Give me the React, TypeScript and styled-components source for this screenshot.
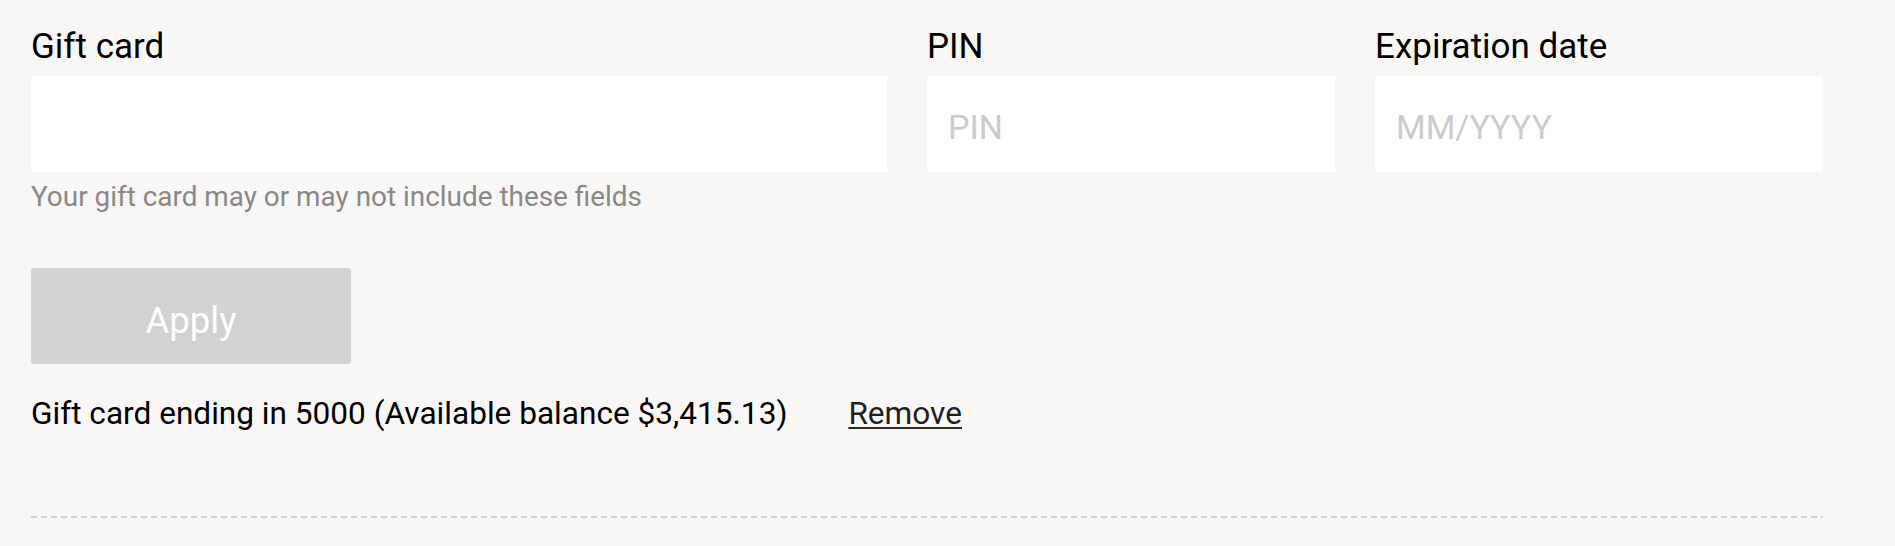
import React from "react";
import styled, { createGlobalStyle } from "styled-components";

const GlobalStyle = createGlobalStyle`
  html, body {
    margin: 0;
    padding: 0;
    background: #f8f7f6;
  }
  body {
    font-family: Roboto, "Liberation Sans", Arial, sans-serif;
    color: #000;
  }
`;

const Page = styled.div`
  width: 1895px;
  height: 546px;
  box-sizing: border-box;
  padding: 23px 0 0 31px;
  background: #f8f7f6;
`;

const Form = styled.div`
  width: 1792px;
  display: flex;
  flex-direction: column;
  align-items: flex-start;
`;

const FieldRow = styled.div`
  display: grid;
  grid-template-columns: 856px 408px 447px;
  column-gap: 40px;
`;

const Field = styled.div`
  display: flex;
  flex-direction: column;
`;

const Label = styled.label`
  font-size: 35px;
  line-height: 48px;
  height: 48px;
  margin-bottom: 5px;
  color: #000;
  white-space: nowrap;
`;

const Input = styled.input`
  box-sizing: border-box;
  width: 100%;
  height: 96px;
  margin: 0;
  border: none;
  outline: none;
  border-radius: 0;
  background: #ffffff;
  padding: 6px 21px 0;
  font-family: Roboto, "Liberation Sans", Arial, sans-serif;
  font-size: 34px;
  color: #000;

  &::placeholder {
    color: #cccccc;
    opacity: 1;
  }
`;

const Hint = styled.div`
  font-size: 27.9px;
  line-height: 40px;
  margin-top: 5px;
  color: #8a8886;
  white-space: nowrap;
`;

const ApplyButton = styled.button`
  box-sizing: border-box;
  width: 320px;
  height: 96px;
  margin-top: 51px;
  padding: 9px 0 0;
  border: none;
  border-radius: 3px;
  background: #d2d2d2;
  color: #ffffff;
  font-family: Roboto, "Liberation Sans", Arial, sans-serif;
  font-size: 36.5px;
  cursor: default;
`;

const BalanceRow = styled.div`
  display: flex;
  align-items: baseline;
  gap: 61px;
  margin-top: 28px;
  font-size: 31.6px;
  line-height: 44px;
  white-space: nowrap;
`;

const BalanceText = styled.span`
  color: #000;
`;

const RemoveLink = styled.a`
  color: #1f1f1f;
  text-decoration: underline;
  text-decoration-color: #2b2b2b;
  text-decoration-thickness: 2px;
  text-underline-offset: 3px;
  cursor: pointer;
`;

const Divider = styled.div`
  width: 1792px;
  height: 2px;
  margin-top: 80px;
  background-image: repeating-linear-gradient(
    to right,
    #d0d0d0 0,
    #d0d0d0 6px,
    transparent 6px,
    transparent 10px
  );
`;

type FieldDef = { label: string; placeholder?: string };

const fields: FieldDef[] = [
  { label: "Gift card" },
  { label: "PIN", placeholder: "PIN" },
  { label: "Expiration date", placeholder: "MM/YYYY" },
];

export default function App() {
  return (
    <>
      <GlobalStyle />
      <Page>
        <Form>
          <FieldRow>
            {fields.map((f) => (
              <Field key={f.label}>
                <Label>{f.label}</Label>
                <Input type="text" placeholder={f.placeholder} aria-label={f.label} />
              </Field>
            ))}
          </FieldRow>
          <Hint>Your gift card may or may not include these fields</Hint>
          <ApplyButton type="button" disabled>
            Apply
          </ApplyButton>
          <BalanceRow>
            <BalanceText>Gift card ending in 5000 (Available balance $3,415.13)</BalanceText>
            <RemoveLink>Remove</RemoveLink>
          </BalanceRow>
          <Divider />
        </Form>
      </Page>
    </>
  );
}
